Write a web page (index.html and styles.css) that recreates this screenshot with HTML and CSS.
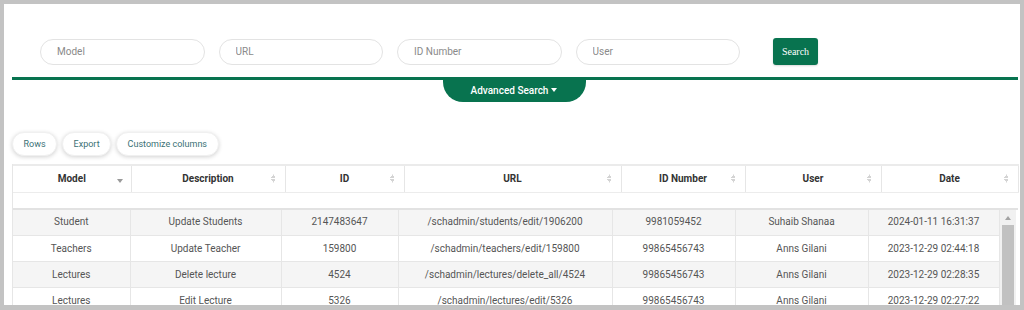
FILE: index.html
```html
<!DOCTYPE html>
<html lang="en">
<head>
    <meta charset="UTF-8">
    <meta name="viewport" content="width=device-width, initial-scale=1.0">
    <title>Activity Log</title>
    <link rel="stylesheet" href="styles.css">
</head>
<body>
    <div class="frame">
        <div class="panel">
            <form class="search-bar">
                <input type="text" class="search-field" placeholder="Model">
                <input type="text" class="search-field" placeholder="URL">
                <input type="text" class="search-field" placeholder="ID Number">
                <input type="text" class="search-field" placeholder="User">
                <button type="button" class="search-btn">Search</button>
            </form>

            <div class="advanced">
                <button type="button" class="advanced-tab">Advanced Search <span class="caret"></span></button>
            </div>

            <div class="toolbar">
                <button type="button" class="tool-btn">Rows</button>
                <button type="button" class="tool-btn">Export</button>
                <button type="button" class="tool-btn">Customize columns</button>
            </div>

            <div class="grid">
                <table class="grid-head">
                    <colgroup>
                        <col class="h-model"><col class="h-desc"><col class="h-id"><col class="h-url">
                        <col class="h-idnum"><col class="h-user"><col class="h-date">
                    </colgroup>
                    <tr>
                        <th><div class="th-inner"><span></span><span>Model</span><span class="sort-down"></span></div></th>
                        <th><div class="th-inner"><span></span><span>Description</span><span class="sort"></span></div></th>
                        <th><div class="th-inner"><span></span><span>ID</span><span class="sort"></span></div></th>
                        <th><div class="th-inner"><span></span><span>URL</span><span class="sort"></span></div></th>
                        <th><div class="th-inner"><span></span><span>ID Number</span><span class="sort"></span></div></th>
                        <th><div class="th-inner"><span></span><span>User</span><span class="sort"></span></div></th>
                        <th><div class="th-inner"><span></span><span>Date</span><span class="sort"></span></div></th>
                    </tr>
                </table>
                <div class="grid-filter"></div>
                <div class="grid-body">
                    <table class="grid-rows">
                        <colgroup>
                            <col class="b-model"><col class="b-desc"><col class="b-id"><col class="b-url">
                            <col class="b-idnum"><col class="b-user"><col class="b-date">
                        </colgroup>
                        <tr>
                            <td>Student</td><td>Update Students</td><td>2147483647</td>
                            <td>/schadmin/students/edit/1906200</td><td>9981059452</td>
                            <td>Suhaib Shanaa</td><td>2024-01-11 16:31:37</td>
                        </tr>
                        <tr>
                            <td>Teachers</td><td>Update Teacher</td><td>159800</td>
                            <td>/schadmin/teachers/edit/159800</td><td>99865456743</td>
                            <td>Anns Gilani</td><td>2023-12-29 02:44:18</td>
                        </tr>
                        <tr>
                            <td>Lectures</td><td>Delete lecture</td><td>4524</td>
                            <td>/schadmin/lectures/delete_all/4524</td><td>99865456743</td>
                            <td>Anns Gilani</td><td>2023-12-29 02:28:35</td>
                        </tr>
                        <tr>
                            <td>Lectures</td><td>Edit Lecture</td><td>5326</td>
                            <td>/schadmin/lectures/edit/5326</td><td>99865456743</td>
                            <td>Anns Gilani</td><td>2023-12-29 02:27:22</td>
                        </tr>
                    </table>
                    <div class="scrollbar">
                        <span class="scroll-up"></span>
                        <span class="scroll-thumb"></span>
                    </div>
                </div>
            </div>
        </div>
    </div>
</body>
</html>
```

FILE: styles.css
```css
* {
    margin: 0;
    padding: 0;
    box-sizing: border-box;
}

body {
    font-family: Roboto, 'Liberation Sans', sans-serif;
    background: #c3c3c3;
    height: 310px;
    overflow: hidden;
}

.frame {
    background: white;
    margin: 4px 4px 0 4px;
    height: 301px;
    overflow: hidden;
}

.panel {
    margin: 0 2px 0 8px;
}

/* search */

.search-bar {
    display: flex;
    align-items: center;
    gap: 14px;
    padding: 34px 0 0 28px;
}

.search-field {
    width: 164.5px;
    height: 26px;
    border: 1.5px solid #e3e3e3;
    border-radius: 13px;
    padding: 0 16px;
    font-family: Roboto, sans-serif;
    font-size: 10px;
    color: #555;
    background: white;
}

.search-field::placeholder {
    color: #8a8a8a;
}

.search-btn {
    margin-left: 19px;
    width: 45px;
    height: 27px;
    background: #08734f;
    color: white;
    border: none;
    border-radius: 3px;
    font-family: 'Liberation Serif', serif;
    font-size: 10px;
    box-shadow: 0 1px 2px rgba(0, 0, 0, 0.15);
}

.advanced {
    margin-top: 12px;
    border-top: 3px solid #08734f;
    display: flex;
    justify-content: center;
}

.advanced-tab {
    width: 143px;
    height: 22px;
    background: #08734f;
    color: white;
    border: none;
    border-radius: 0 0 20px 20px;
    font-family: Roboto, sans-serif;
    font-size: 10px;
    font-weight: 500;
    display: flex;
    align-items: center;
    justify-content: center;
    gap: 3px;
    padding-bottom: 2px;
    margin-left: -2px;
}

.caret {
    width: 0;
    height: 0;
    border-left: 3px solid transparent;
    border-right: 3px solid transparent;
    border-top: 4px solid white;
}

/* toolbar */

.toolbar {
    display: flex;
    gap: 5px;
    margin-top: 30px;
}

.tool-btn {
    height: 24px;
    padding: 0 10.5px;
    background: white;
    border: 1px solid #f0f0f0;
    border-radius: 12px;
    box-shadow: 0 1px 4px rgba(0, 0, 0, 0.18);
    font-family: Roboto, sans-serif;
    font-size: 9px;
    color: #3a7175;
}

/* grid */

.grid {
    margin-top: 8px;
    border-left: 1px solid #e6e6e6;
}

.grid-head,
.grid-rows {
    table-layout: fixed;
    border-collapse: collapse;
}

.grid-head {
    width: 1005px;
    border-top: 2px solid #ebebeb;
}

.grid-head th {
    height: 27px;
    border-right: 1px solid #e6e6e6;
    border-bottom: 1px solid #ececec;
    font-size: 10px;
    font-weight: 700;
    color: #333;
}

.th-inner {
    display: grid;
    grid-template-columns: 14px 1fr 14px;
    align-items: center;
    text-align: center;
}

.sort {
    justify-self: start;
    width: 5px;
    height: 9px;
    background:
        linear-gradient(to bottom right, transparent 50%, #d4d4d4 50%) 0 0 / 2.5px 4px no-repeat,
        linear-gradient(to bottom left, transparent 50%, #d4d4d4 50%) 2.5px 0 / 2.5px 4px no-repeat,
        linear-gradient(to top right, transparent 50%, #d4d4d4 50%) 0 5px / 2.5px 4px no-repeat,
        linear-gradient(to top left, transparent 50%, #d4d4d4 50%) 2.5px 5px / 2.5px 4px no-repeat;
}

.sort-down {
    justify-self: start;
    margin-top: 4px;
    width: 0;
    height: 0;
    border-left: 3px solid transparent;
    border-right: 3px solid transparent;
    border-top: 4px solid #9a9a9a;
}

.h-model { width: 118px; }
.h-desc { width: 154px; }
.h-id { width: 119px; }
.h-url { width: 217px; }
.h-idnum { width: 124px; }
.h-user { width: 136px; }
.h-date { width: 137px; }

.grid-filter {
    height: 15px;
}

.grid-body {
    display: flex;
    align-items: flex-start;
    border-top: 2px solid #e2e2e2;
}

.grid-rows {
    width: 986px;
}

.grid-rows td {
    height: 26px;
    padding: 0;
    border-right: 1px solid #e6e6e6;
    border-bottom: 1px solid #e6e6e6;
    text-align: center;
    font-size: 10px;
    line-height: 12px;
    color: #555;
    white-space: nowrap;
}

.grid-rows tr:nth-child(odd) td {
    background: #f5f5f5;
}

.b-model { width: 117px; }
.b-desc { width: 151px; }
.b-id { width: 117px; }
.b-url { width: 214px; }
.b-idnum { width: 123px; }
.b-user { width: 133px; }
.b-date { width: 131px; }

.scrollbar {
    width: 16px;
    background: #f1f1f1;
    display: flex;
    flex-direction: column;
    align-items: center;
}

.scroll-up {
    margin-top: 6px;
    width: 0;
    height: 0;
    border-left: 3.5px solid transparent;
    border-right: 3.5px solid transparent;
    border-bottom: 4px solid #a3a3a3;
}

.scroll-thumb {
    margin-top: 5px;
    width: 12px;
    height: 100px;
    background: #c1c1c1;
}
```
